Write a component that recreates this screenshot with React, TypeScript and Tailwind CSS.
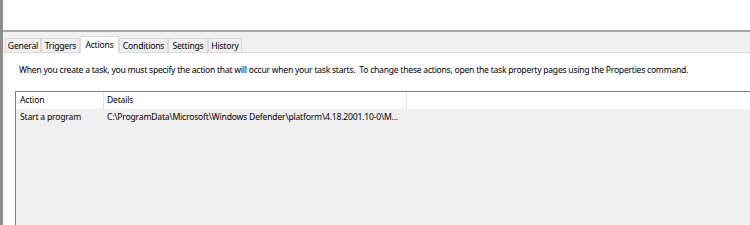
import React from "react";

const tabs = ["General", "Triggers", "Actions", "Conditions", "Settings", "History"];
const widths = [36, 39, 39, 49, 40, 34];

export default function App() {
  return (
    <div
      className="w-[750px] h-[225px] overflow-hidden flex bg-white text-[8.6px] text-[#000] tracking-[-0.2px]"
      style={{ fontFamily: '"Noto Sans", "Open Sans", sans-serif' }}
    >
      <div className="w-[3px] h-full bg-[#8c8c8c] shrink-0" />
      <div className="flex-1 flex flex-col min-w-0">
        <div className="h-[32px] bg-white border-b-2 border-[#a7a7a7] shrink-0" />
        <div className="bg-[#f0f0f0] pl-[2px] flex items-end h-[21px] shrink-0 border-b border-[#d9d9d9]">
          {tabs.map((t, i) =>
            t === "Actions" ? (
              <div
                key={t}
                style={{ width: widths[i] }}
                className="h-[17px] -mb-px bg-white border border-b-0 border-[#d9d9d9] flex items-start pt-[2px] justify-center leading-[12px] relative z-10 shrink-0"
              >
                {t}
              </div>
            ) : (
              <div
                key={t}
                style={{ width: widths[i] }}
                className="h-[14px] bg-[#f0f0f0] border border-b-0 border-[#d9d9d9] flex items-center justify-center leading-[12px] shrink-0"
              >
                {t}
              </div>
            )
          )}
        </div>
        <div className="flex-1 bg-white pl-[12px] pt-[11px] flex flex-col">
          <div className="leading-[12px] pl-[4px] whitespace-nowrap tracking-[-0.25px]">
            When you create a task, you must specify the action that will occur when your task starts.&nbsp; To change these actions, open the task property pages using the Properties command.
          </div>
          <div className="mt-[15px] flex-1 border-l border-t border-[#828282] bg-[#efefef] flex flex-col">
            <div className="h-[17px] bg-white flex leading-none items-center">
              <div className="w-[88px] pl-[4px] h-full flex items-center border-r border-[#e5e5e5]">Action</div>
              <div className="w-[303px] pl-[3px] h-full flex items-center border-r border-[#e5e5e5]">Details</div>
            </div>
            <div className="h-[17px] flex leading-none items-center">
              <div className="w-[88px] pl-[4px]">Start a program</div>
              <div className="pl-[3px] whitespace-nowrap">C:\ProgramData\Microsoft\Windows Defender\platform\4.18.2001.10-0\M...</div>
            </div>
          </div>
        </div>
      </div>
    </div>
  );
}
